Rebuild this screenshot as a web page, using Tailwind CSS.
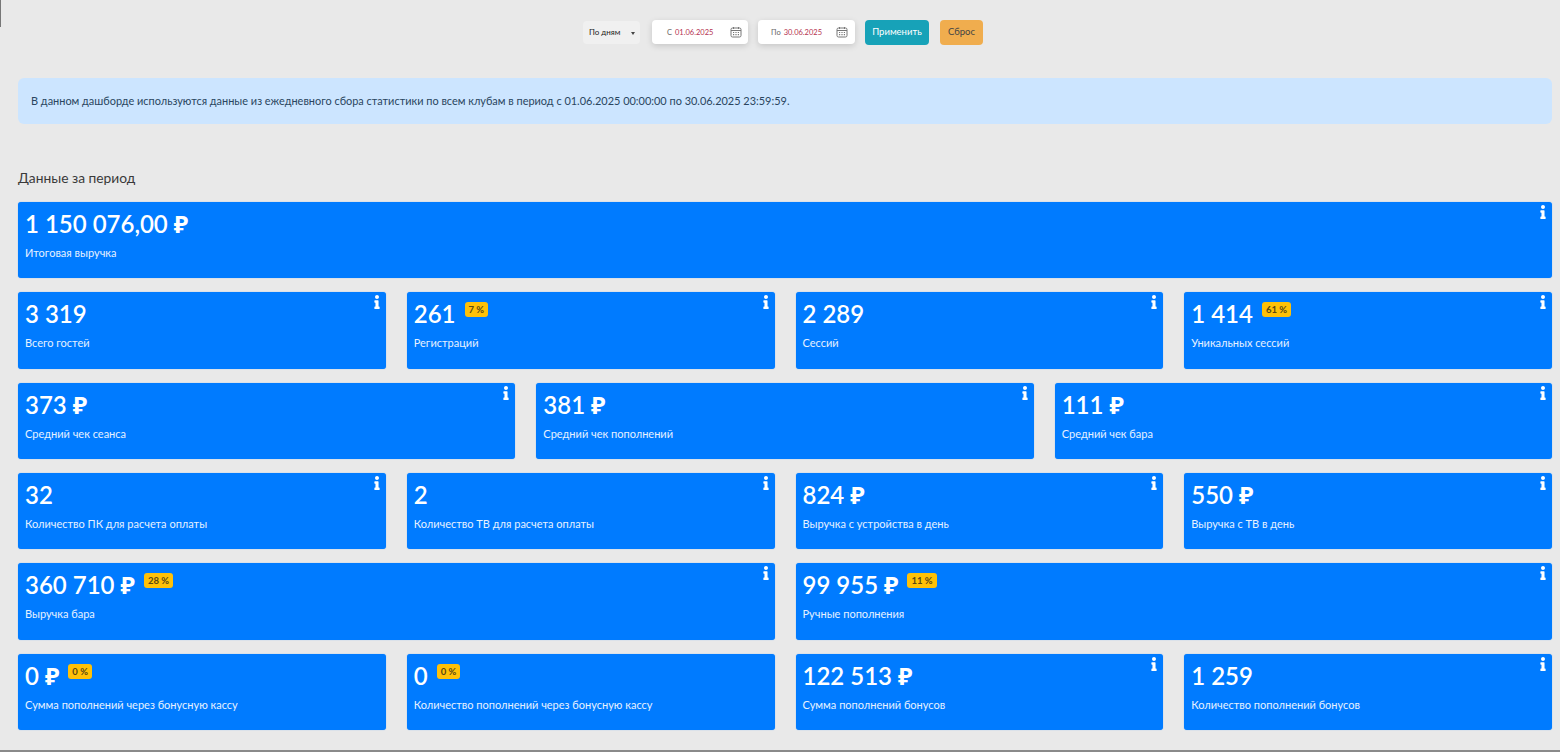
<!DOCTYPE html>
<html lang="ru">

<head>
    <meta charset="UTF-8">
    <title>Дашборд</title>
    <script src="https://cdn.jsdelivr.net/npm/@tailwindcss/browser@4"></script>
</head>

<body class="relative bg-[#e9e9e9] font-['Lato','Noto_Sans',sans-serif] text-[#343a40] h-[752px] overflow-hidden">
    <div class="absolute top-0 left-0 w-px h-[27px] bg-[#777]"></div>
    <div class="border-b-2 border-[#8a8a8a] h-[752px] pl-[18px] pr-2 pt-5">
        <div class="flex justify-center items-center h-6 pr-[4px]">
            <div class="w-[57px] h-[23px] bg-[#f0f0f0] rounded-sm flex items-center justify-between pl-[6px] pr-[5px] text-[8px] text-[#222]">
                <span>По дням</span>
                <span class="w-0 h-0 mt-[3px] border-x-[2.5px] border-t-[3px] border-x-transparent border-t-[#444]"></span>
            </div>
            <div class="ml-3 w-[96px] h-6 bg-white rounded-[4px] shadow-[0_2px_6px_rgba(0,0,0,0.15)] flex items-center pl-[15px] pr-[6px] pt-[1px] text-[7.5px]">
                <span class="text-[#666]">С</span><span class="ml-[3px] text-[#b5324f]">01.06.2025</span>
                <svg class="ml-auto -mt-[1px]" width="12" height="12" viewBox="0 0 12 12" fill="none" stroke="#777" stroke-width="1"><rect x="1" y="2" width="10" height="9" rx="1.5"/><path d="M1 4.5h10M3.5 1v2M8.5 1v2"/><path d="M3 6.5h1.2M5.4 6.5h1.2M7.8 6.5H9M3 8.7h1.2M5.4 8.7h1.2M7.8 8.7H9" stroke-width="1.2"/></svg>
            </div>
            <div class="ml-[10px] w-[97px] h-6 bg-white rounded-[4px] shadow-[0_2px_6px_rgba(0,0,0,0.15)] flex items-center pl-[13px] pr-[7px] pt-[1px] text-[7.5px]">
                <span class="text-[#666]">По</span><span class="ml-[3px] text-[#b5324f]">30.06.2025</span>
                <svg class="ml-auto -mt-[1px]" width="12" height="12" viewBox="0 0 12 12" fill="none" stroke="#777" stroke-width="1"><rect x="1" y="2" width="10" height="9" rx="1.5"/><path d="M1 4.5h10M3.5 1v2M8.5 1v2"/><path d="M3 6.5h1.2M5.4 6.5h1.2M7.8 6.5H9M3 8.7h1.2M5.4 8.7h1.2M7.8 8.7H9" stroke-width="1.2"/></svg>
            </div>
            <button class="ml-[10px] w-[64px] h-[25px] bg-[#17a2b8] rounded-[4px] text-[9.5px] text-white">Применить</button>
            <button class="ml-[11px] w-[43px] h-[25px] bg-[#f0ad4e] rounded-[4px] text-[9.5px] text-[#444]">Сброс</button>
        </div>

        <div class="mt-[34px] h-[46px] bg-[#cce5ff] rounded-md flex items-center pl-[13px] text-[10.95px] text-[#2a4560]">
            В данном дашборде используются данные из ежедневного сбора статистики по всем клубам в период с 01.06.2025 00:00:00 по 30.06.2025 23:59:59.
        </div>

        <h2 class="mt-[43px] h-[22px] text-[13.8px] leading-[22px] text-[#3a3a3a]">Данные за период</h2>

        <div id="cards" class="mt-[12.8px] grid grid-cols-12 gap-x-[21px] gap-y-[14px] auto-rows-[76.4px]"></div>
    </div>

    <script>
        const cards = [
            { value: '1 150 076,00', rub: true, label: 'Итоговая выручка', span: 'col-span-12', info: true },
            { value: '3 319', label: 'Всего гостей', span: 'col-span-3', info: true },
            { value: '261', badge: '7 %', label: 'Регистраций', span: 'col-span-3', info: true },
            { value: '2 289', label: 'Сессий', span: 'col-span-3', info: true },
            { value: '1 414', badge: '61 %', label: 'Уникальных сессий', span: 'col-span-3', info: true },
            { value: '373', rub: true, label: 'Средний чек сеанса', span: 'col-span-4', info: true },
            { value: '381', rub: true, label: 'Средний чек пополнений', span: 'col-span-4', info: true },
            { value: '111', rub: true, label: 'Средний чек бара', span: 'col-span-4', info: true },
            { value: '32', label: 'Количество ПК для расчета оплаты', span: 'col-span-3', info: true },
            { value: '2', label: 'Количество ТВ для расчета оплаты', span: 'col-span-3', info: true },
            { value: '824', rub: true, label: 'Выручка с устройства в день', span: 'col-span-3', info: true },
            { value: '550', rub: true, label: 'Выручка с ТВ в день', span: 'col-span-3', info: true },
            { value: '360 710', rub: true, badge: '28 %', label: 'Выручка бара', span: 'col-span-6', info: true },
            { value: '99 955', rub: true, badge: '11 %', label: 'Ручные пополнения', span: 'col-span-6', info: true },
            { value: '0', rub: true, badge: '0 %', label: 'Сумма пополнений через бонусную кассу', span: 'col-span-3' },
            { value: '0', badge: '0 %', label: 'Количество пополнений через бонусную кассу', span: 'col-span-3' },
            { value: '122 513', rub: true, label: 'Сумма пополнений бонусов', span: 'col-span-3', info: true },
            { value: '1 259', label: 'Количество пополнений бонусов', span: 'col-span-3', info: true }
        ];

        const infoIcon = `<svg class="absolute top-[3px] right-[6px] w-[6px] h-[14px]" viewBox="0 0 192 512" fill="#fff"><path d="M20 424.229h20V279.771H20c-11.046 0-20-8.954-20-20V212c0-11.046 8.954-20 20-20h112c11.046 0 20 8.954 20 20v212.229h20c11.046 0 20 8.954 20 20V492c0 11.046-8.954 20-20 20H20c-11.046 0-20-8.954-20-20v-47.771c0-11.046 8.954-20 20-20zM96 0C56.235 0 24 32.235 24 72s32.235 72 72 72 72-32.235 72-72S135.764 0 96 0z"/></svg>`;

        document.getElementById('cards').innerHTML = cards.map(card => `
            <div class="${card.span} relative bg-[#007bff] rounded-[3px] shadow-[0_0_1px_rgba(0,123,255,0.6)] text-white pl-[7px] pt-[6px]">
                <div class="flex items-start h-[32px]">
                    <span class="text-[24px] leading-[32px] font-semibold whitespace-nowrap">${card.value}${card.rub ? '<span class="font-bold ml-[6px]">₽</span>' : ''}</span>
                    ${card.badge ? `<span class="ml-[9px] mt-[4px] h-[15px] px-[4px] bg-[#ffc107] rounded-[3px] text-[9.5px] leading-[15px] font-bold text-[#5a4713]">${card.badge}</span>` : ''}
                </div>
                <div class="mt-[6px] text-[11px] leading-[14px] text-[#e6f1ff]">${card.label}</div>
                ${card.info ? infoIcon : ''}
            </div>`).join('');
    </script>
</body>

</html>
